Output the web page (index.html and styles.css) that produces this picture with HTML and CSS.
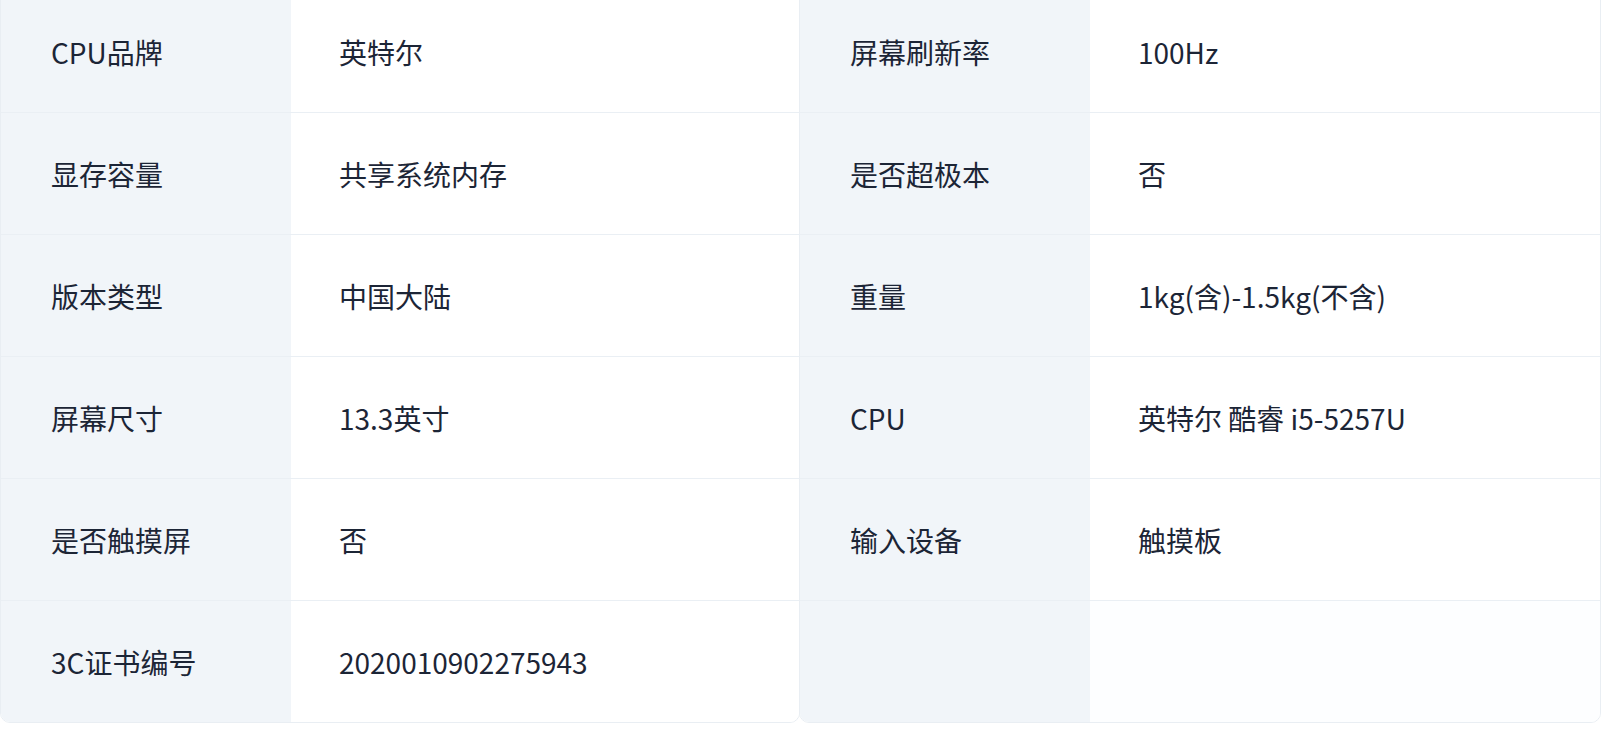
FILE: index.html
```html
<!DOCTYPE html>
<html lang="zh-CN">
<head>
<meta charset="utf-8">
<title>规格参数</title>
<link rel="stylesheet" href="styles.css">
</head>
<body>
<div class="specs">
  <div class="card">
    <div class="row"><div class="label">CPU品牌</div><div class="value">英特尔</div></div>
    <div class="row"><div class="label">显存容量</div><div class="value">共享系统内存</div></div>
    <div class="row"><div class="label">版本类型</div><div class="value">中国大陆</div></div>
    <div class="row"><div class="label">屏幕尺寸</div><div class="value">13.3英寸</div></div>
    <div class="row"><div class="label">是否触摸屏</div><div class="value">否</div></div>
    <div class="row last"><div class="label">3C证书编号</div><div class="value">2020010902275943</div></div>
  </div>
  <div class="card">
    <div class="row"><div class="label">屏幕刷新率</div><div class="value">100Hz</div></div>
    <div class="row"><div class="label">是否超极本</div><div class="value">否</div></div>
    <div class="row"><div class="label">重量</div><div class="value">1kg(含)-1.5kg(不含)</div></div>
    <div class="row"><div class="label">CPU</div><div class="value">英特尔 酷睿 i5-5257U</div></div>
    <div class="row"><div class="label">输入设备</div><div class="value">触摸板</div></div>
    <div class="row last empty"><div class="label"></div><div class="value"></div></div>
  </div>
</div>
</body>
</html>
```
FILE: styles.css
```css
html, body {
  margin: 0;
  padding: 0;
  background: #ffffff;
}
body {
  font-family: "Noto Sans CJK SC", "Noto Sans", sans-serif;
  color: #1c2536;
  overflow: hidden;
}
.specs {
  display: grid;
  grid-template-columns: 800px 801px;
  margin-top: -10px;
}
.card {
  border: 1.5px solid #e9eef3;
  border-radius: 10px;
  overflow: hidden;
  display: flex;
  flex-direction: column;
}
.card + .card {
  margin-left: -1px;
}
.row {
  display: flex;
  height: 122px;
  border-bottom: 1.5px solid #eaeff4;
  box-sizing: border-box;
  flex: none;
}
.row.last {
  border-bottom: none;
  height: 121px;
}
.label {
  width: 290px;
  flex: none;
  background: #f1f5f9;
  display: flex;
  align-items: center;
  padding-left: 50px;
  box-sizing: border-box;
  font-size: 28px;
  line-height: 1;
}
.value {
  flex: 1;
  display: flex;
  align-items: center;
  padding-left: 48px;
  font-size: 28px;
  line-height: 1;
  background: #ffffff;
}
.empty .value {
  background: #fdfeff;
}
```
